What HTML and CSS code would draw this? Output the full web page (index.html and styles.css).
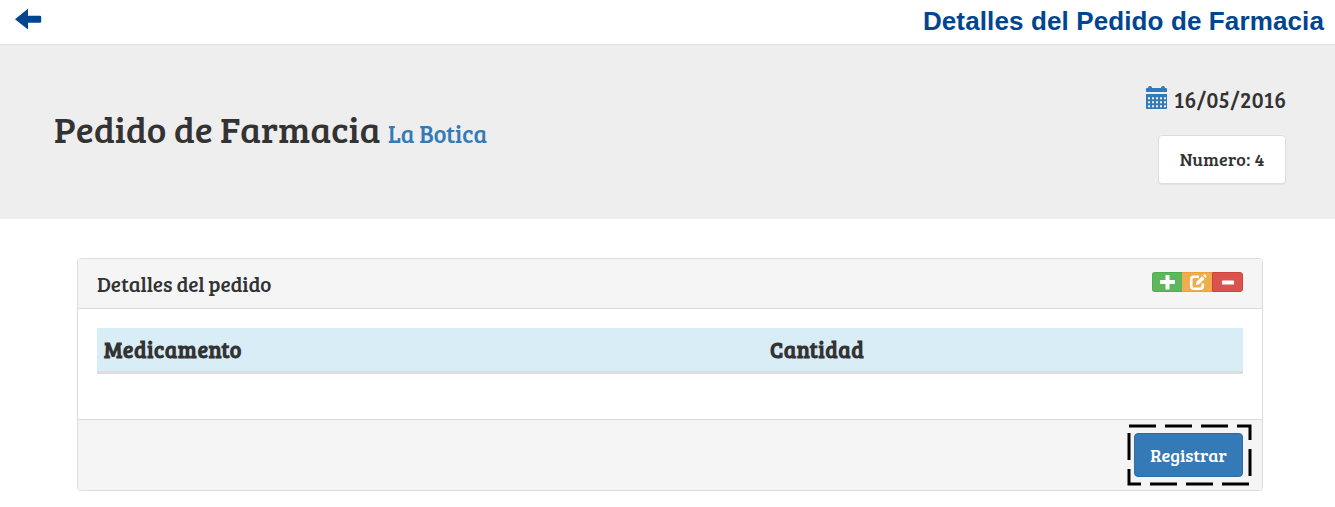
FILE: index.html
```html
<!DOCTYPE html>
<html lang="es">
<head>
<meta charset="utf-8">
<title>Detalles del Pedido de Farmacia</title>
<link rel="stylesheet" href="styles.css">
</head>
<body>
<header class="topbar">
  <a class="back" href="#" aria-label="Volver"><svg width="27" height="22" viewBox="0 0 27 22"><path fill="currentColor" d="M0 11.200 13 .8V7.700H25Q26.200 7.700 26.200 8.900V13.500Q26.200 14.700 25 14.700H13V21.400Z"/></svg></a>
  <h1 class="topbar-title">Detalles del Pedido de Farmacia</h1>
</header>
<section class="hero">
  <h2 class="hero-title">Pedido de Farmacia <small class="client">La Botica</small></h2>
  <div class="meta">
    <div class="date">
      <svg class="calendar" width="21" height="24" viewBox="0 0 21 24"><path fill="currentColor" d="M0 6V3Q0 2 1 2H2Q2 0 4 0T6 2H15Q15 0 17 0T19 2H20Q21 2 21 3V6ZM0 8H21V22Q21 23 20 23H1Q0 23 0 22Z"/><path stroke="#eee" stroke-width="2" stroke-dasharray="2 2" d="M2 12.200H20M2 16.200H20M2 20.200H20"/></svg>
      <span class="date-text">16/05/2016</span>
    </div>
    <div class="number"><span class="number-text">Numero: 4</span></div>
  </div>
</section>
<main class="panel">
  <div class="panel-heading">
    <h3 class="panel-title">Detalles del pedido</h3>
    <div class="btn-group">
      <button class="btn add" aria-label="Agregar"><svg width="16" height="16" viewBox="0 0 16 16"><path fill="#fff" d="M5.500 1.500Q5.500 1 6 1H9Q9.500 1 9.500 1.500V6H14.500Q15 6 15 6.500V9.500Q15 10 14.500 10H9.500V15Q9.500 15.500 9 15.500H6Q5.500 15.500 5.500 15V10H.5Q0 10 0 9.500V6.500Q0 6 .5 6H5.500Z"/></svg></button>
      <button class="btn edit" aria-label="Editar"><svg width="18" height="17" viewBox="0 0 18 17"><path fill="none" stroke="#fff" stroke-width="2.600" d="M10 2.800H5Q2.200 2.800 2.200 5.500V12Q2.200 14.800 5 14.800H11Q13.800 14.800 13.800 12V9.500"/><path fill="#fff" d="M6.800 11 7.600 7.800 13 2.200 15.600 4.800 10.200 10.200ZM14 1.400 15 .5Q15.800 0 16.500.7L17.200 1.500Q17.800 2.300 17.200 3L16.400 3.800Z"/></svg></button>
      <button class="btn remove" aria-label="Quitar"><svg width="14" height="16" viewBox="0 0 14 16"><rect x="1" y="6.500" width="12" height="4" rx=".5" fill="#fff"/></svg></button>
    </div>
  </div>
  <div class="panel-body">
    <table class="table">
      <thead><tr><th class="col-name">Medicamento</th><th>Cantidad</th></tr></thead>
    </table>
  </div>
  <div class="panel-footer">
    <button class="register"><span class="register-text">Registrar</span>
      <svg class="focus-frame" width="125" height="62" viewBox="0 0 125 62"><rect x="2" y="2" width="121" height="58" fill="none" stroke="#000" stroke-width="3" stroke-dasharray="27 9"/></svg>
    </button>
  </div>
</main>
</body>
</html>
```
FILE: styles.css
```css
* { box-sizing: border-box; }
body {
  margin: 0;
  background: #fff;
  color: #333;
  font-family: "Bree Serif", "DejaVu Serif Condensed", "DejaVu Serif", serif;
}
h1, h2, h3 { margin: 0; font-weight: 400; white-space: nowrap; }
svg { display: block; }
button { font: inherit; margin: 0; padding: 0; }

.topbar {
  display: flex;
  justify-content: space-between;
  height: 45px;
  padding: 0 11px 0 15px;
  border-bottom: 1px solid #e0e0e0;
  color: #004590;
}
.back { padding-top: 8px; color: inherit; }
.topbar-title {
  font: bold 26px/42px "Liberation Sans", Arial, sans-serif;
  letter-spacing: .12px;
}

.hero {
  display: flex;
  justify-content: space-between;
  height: 174px;
  padding: 0 49px 0 54px;
  background: #eee;
}
.hero-title { padding-top: 59px; font-size: 37px; line-height: 48px; }
.client { color: #337ab7; font-size: 24px; }
.meta { display: flex; flex-direction: column; align-items: flex-end; padding-top: 41px; }
.date { display: flex; gap: 7px; height: 49px; }
.calendar { color: #337ab7; }
.date-text { font-size: 22px; line-height: 26px; letter-spacing: .4px; margin-right: -.4px; }
.number {
  display: flex;
  align-items: center;
  justify-content: center;
  width: 128px;
  height: 49px;
  padding-bottom: 2px;
  background: #fff;
  border: 1px solid #ddd;
  border-radius: 4px;
  box-shadow: 0 1px 1px rgba(0, 0, 0, .05);
}
.number-text { font-size: 18px; letter-spacing: .3px; white-space: nowrap; }
.register-text { font-size: 18px; }

.panel {
  width: 1186px;
  height: 233px;
  margin: 39px 0 0 77px;
  border: 1px solid #ddd;
  border-radius: 4px;
  box-shadow: 0 1px 1px rgba(0, 0, 0, .05);
}
.panel-heading {
  display: flex;
  justify-content: space-between;
  height: 50px;
  padding: 13px 19px 0;
  background: #f5f5f5;
  border-bottom: 1px solid #ddd;
  border-radius: 3px 3px 0 0;
}
.panel-title { font-size: 21px; line-height: 24px; letter-spacing: -.1px; }
.btn-group { display: flex; }
.btn {
  display: flex;
  align-items: center;
  justify-content: center;
  height: 20px;
  border: 1px solid;
}
.add { width: 30px; background: #5cb85c; border-color: #4cae4c; border-right: 0; border-radius: 3px 0 0 3px; }
.edit { width: 30px; background: #f0ad4e; border-color: #eea236; border-width: 1px 0; padding-left: 2px; }
.remove { width: 31px; background: #d9534f; border-color: #d43f3a; border-radius: 0 3px 3px 0; }

.panel-body { height: 110px; padding: 19px; }
.table { width: 100%; border-collapse: separate; border-spacing: 0; }
.table th {
  height: 46px;
  padding: 0 7px 2px;
  background: #d9edf7;
  border-bottom: 3px solid #ddd;
  font-size: 22px;
  letter-spacing: .5px;
  text-align: left;
}
.col-name { width: 666px; }
.panel-footer {
  display: flex;
  justify-content: flex-end;
  height: 71px;
  padding: 13px 19px;
  background: #f5f5f5;
  border-top: 1px solid #ddd;
  border-radius: 0 0 3px 3px;
}
.register {
  position: relative;
  width: 109px;
  height: 44px;
  background: #337ab7;
  border: 1px solid #2e6da4;
  border-radius: 4px;
  color: #fff;
}
.focus-frame { position: absolute; left: -8px; top: -10px; }
```
